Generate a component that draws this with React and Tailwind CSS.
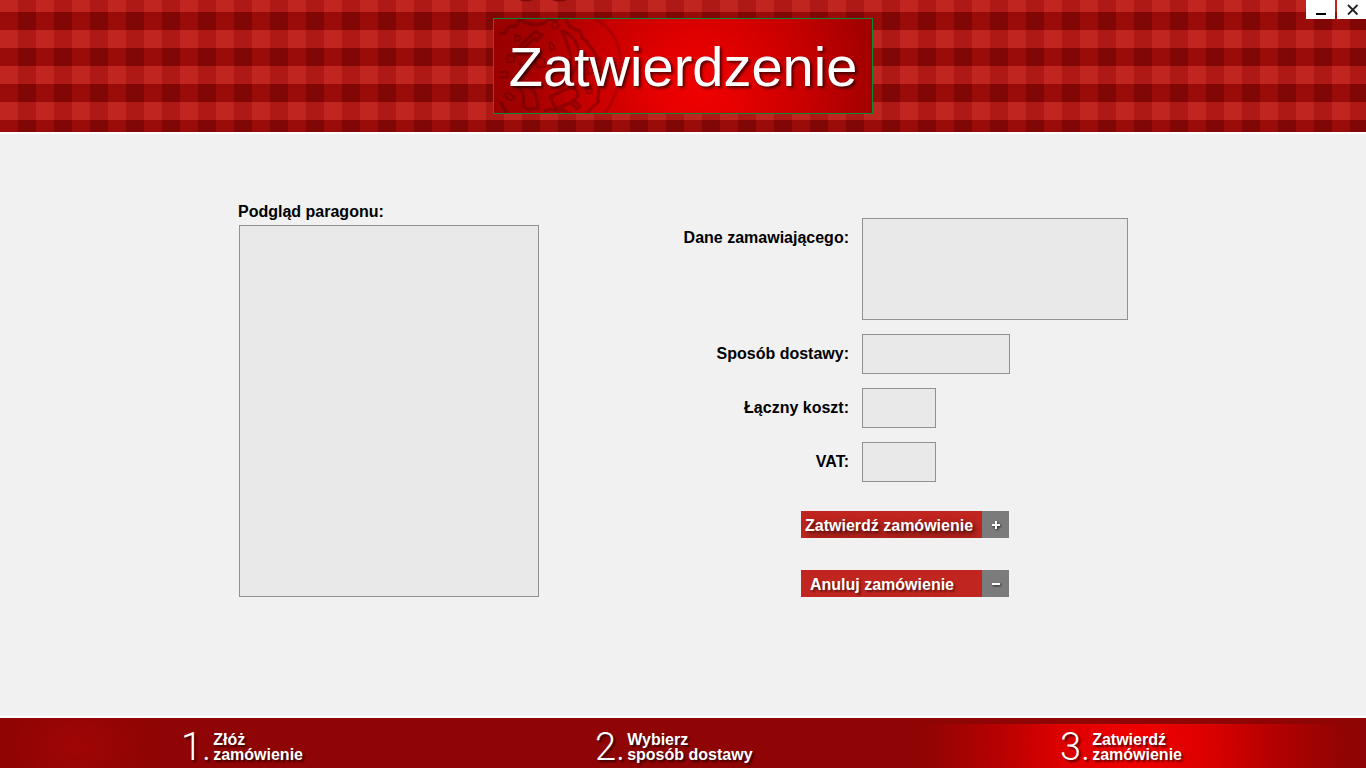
import React from "react";

const steps = [
  { number: "1.", top: "Złóż", bottom: "zamówienie" },
  { number: "2.", top: "Wybierz", bottom: "sposób dostawy" },
  { number: "3.", top: "Zatwierdź", bottom: "zamówienie" },
];

const fieldBox = "block resize-none border border-[#919191] bg-[#e9e9e9] px-2 text-base outline-none";

function PizzaMark() {
  return (
    <svg
      aria-hidden="true"
      viewBox="27 57 390 282"
      className="absolute left-0 top-0 h-[94px] w-[130px]"
      fill="none"
      stroke="#400000"
      strokeOpacity="0.3"
      strokeWidth="10"
      strokeLinejoin="round"
      strokeLinecap="round"
    >
      <path strokeOpacity="0.18" d="M326 54C378 82 407 130 407 190C407 252 389 301 356 345" />
      <path d="M47 99L59 100C70 77 78 75 92 80L105 58C127 74 151 77 177 70L190 59L221 56M244 62C251 80 262 90 284 91C287 108 293 121 307 124C307 139 321 140 324 151C334 162 332 174 346 180C349 198 342 210 353 222C344 237 347 252 340 266C345 281 334 291 340 306L324 319C322 326 313 328 305 340M47 308C54 312 50 323 63 331L60 341M180 331L196 327L220 334L234 329L252 341" />
      <path d="M105 138L151 94L172 106L155 121L147 115L113 148ZM229 93C261 100 278 128 281 155C285 193 266 217 253 231L235 224C256 203 264 171 249 142C243 125 239 105 229 93Z" />
      <g strokeWidth="6">
        <path d="M200 72L212 64L222 75L217 85L205 86ZM90 104L106 111L105 120L91 125ZM194 126L207 137L208 147L198 151L193 140ZM68 166L88 168L86 185L66 187ZM47 216L67 216L68 230L49 232M58 280L73 280L88 292L81 300L66 297ZM312 193L322 202L325 216L310 224L307 205ZM304 263L320 267L319 279L306 280Z" />
        <path d="M157 166L179 180L181 199L157 203L151 184ZM106 188L126 202L124 220L105 222Z" />
      </g>
      <path d="M196 290L251 264C272 261 282 275 278 289C270 301 238 320 211 324ZM258 309L276 327L286 318L269 304M99 261C120 277 118 298 114 317L127 328L157 324C161 299 151 272 133 260M104 250C116 259 133 261 145 260" />
    </svg>
  );
}

function ActionButton({ children, sign, className }) {
  return (
    <button
      type="button"
      className="flex h-[27px] w-[208px] items-stretch overflow-hidden bg-[#c0251f] text-left text-base font-bold text-white"
    >
      <span className={`flex-1 leading-[29px] whitespace-nowrap ${className}`}>{children}</span>
      <span className="flex w-[27px] items-center justify-center bg-[#7b7b7b]">
        <svg aria-hidden="true" viewBox="0 0 12 12" className="h-3 w-3 drop-shadow-[1px_1px_1px_rgba(0,0,0,0.7)]">
          <path d={sign} stroke="#fff" strokeWidth="2" shapeRendering="crispEdges" />
        </svg>
      </span>
    </button>
  );
}

function Field({ id, label, children }) {
  return (
    <div className="flex items-start gap-[13px]">
      <label htmlFor={id} className="flex-1 text-right leading-10 whitespace-nowrap">
        {label}
      </label>
      <div className="w-[266px]">{children}</div>
    </div>
  );
}

export default function App() {
  return (
    <div className="flex min-h-screen flex-col bg-[#f1f1f1] font-['Liberation_Sans',Arial,sans-serif] text-black">
      <header className="relative flex h-[134px] justify-center border-b-2 border-white bg-[conic-gradient(#800705_25%,#ae1916_25%_50%,#c0251f_50%_75%,#9a0c09_75%)] bg-[length:36px_36px] bg-[position:0_12px] pt-[18px]">
        <svg aria-hidden="true" viewBox="0 0 50 3" className="absolute top-0 left-1/2 -ml-[165px] h-[3px] w-[50px]" fill="#7d0c0a">
          <path d="M1 0H15Q8 3 1 0ZM34 0H49Q42 3 34 0Z" />
        </svg>
        <div className="relative flex h-24 w-[380px] items-center justify-center overflow-hidden border border-[#0b8a3c] bg-[radial-gradient(circle_at_54%_75%,#f00000_0px,#e60000_40px,#c40000_115px,#a00000_180px,#960000_230px)]">
          <PizzaMark />
          <h1 className="relative pt-[2px] text-[56px] leading-[64px] text-white [text-shadow:2px_2px_3px_rgba(0,0,0,0.65)]">
            Zatwierdzenie
          </h1>
        </div>
        <div className="absolute top-0 right-0 flex gap-[2px]">
          <button type="button" aria-label="Minimalizuj" className="flex h-[19px] w-[29px] items-center justify-center bg-white">
            <svg aria-hidden="true" viewBox="0 0 29 19" className="h-[19px] w-[29px]">
              <path d="M10 14H20" stroke="#000" strokeWidth="2" />
            </svg>
          </button>
          <button type="button" aria-label="Zamknij" className="flex h-[19px] w-[29px] items-center justify-center bg-white">
            <svg aria-hidden="true" viewBox="0 0 29 19" className="h-[19px] w-[29px]">
              <path d="M11 5L20.500 14.500M20.500 5L11 14.500" stroke="#222" strokeWidth="1.800" />
            </svg>
          </button>
        </div>
      </header>

      <main className="mx-auto flex w-full max-w-[890px] flex-1 items-start justify-between pt-[67px] pb-8 text-base font-bold">
        <section>
          <label htmlFor="receipt" className="block pb-[2px] leading-[22px]">
            Podgląd paragonu:
          </label>
          <textarea id="receipt" readOnly className={`${fieldBox} ml-px h-[372px] w-[300px]`} />
        </section>

        <form className="w-[450px] pt-[17px]" onSubmit={(e) => e.preventDefault()}>
          <div className="flex flex-col gap-[14px]">
            <Field id="customer" label="Dane zamawiającego:">
              <textarea id="customer" readOnly className={`${fieldBox} h-[102px] w-full`} />
            </Field>
            <Field id="delivery" label="Sposób dostawy:">
              <input id="delivery" readOnly className={`${fieldBox} h-10 w-[148px]`} />
            </Field>
            <Field id="total" label="Łączny koszt:">
              <input id="total" readOnly className={`${fieldBox} h-10 w-[74px]`} />
            </Field>
            <Field id="vat" label="VAT:">
              <input id="vat" readOnly className={`${fieldBox} h-10 w-[74px]`} />
            </Field>
          </div>
          <div className="mt-[29px] ml-[123px] flex flex-col gap-8">
            <ActionButton sign="M2 6H10M6 2V10" className="pl-1 [text-shadow:2px_2px_2px_rgba(0,0,0,0.3),3px_4px_8px_rgba(0,0,0,0.6)]">
              Zatwierdź zamówienie
            </ActionButton>
            <ActionButton sign="M2 6H10" className="pl-[9px] [text-shadow:2px_2px_2px_rgba(0,0,0,0.45)]">
              Anuluj zamówienie
            </ActionButton>
          </div>
        </form>
      </main>

      <footer className="h-[52px] border-t-2 border-white bg-[#8f0404] bg-[radial-gradient(ellipse_76px_60px_at_5.600%_28px,#a00505,transparent),radial-gradient(ellipse_215px_300px_at_83%_20px,#f20000_0%,#dc0000_35%,#b40101_65%,#8f0404_100%)] bg-[length:100%_100%,100%_44px] bg-[position:0_0,0_6px] bg-no-repeat pl-[181px] text-white">
        <ol className="grid grid-cols-[414fr_465fr_306fr] [text-shadow:2px_2px_2px_rgba(0,0,0,0.6)]">
          {steps.map((step) => (
            <li key={step.number} className="flex h-[50px] items-center gap-[2px]">
              <span className="pt-2 font-[Roboto,sans-serif] text-[38px] leading-[50px] font-light">{step.number}</span>
              <span className="pt-2 text-base leading-[15px] font-bold whitespace-nowrap">
                {step.top}
                <br />
                {step.bottom}
              </span>
            </li>
          ))}
        </ol>
      </footer>
    </div>
  );
}
